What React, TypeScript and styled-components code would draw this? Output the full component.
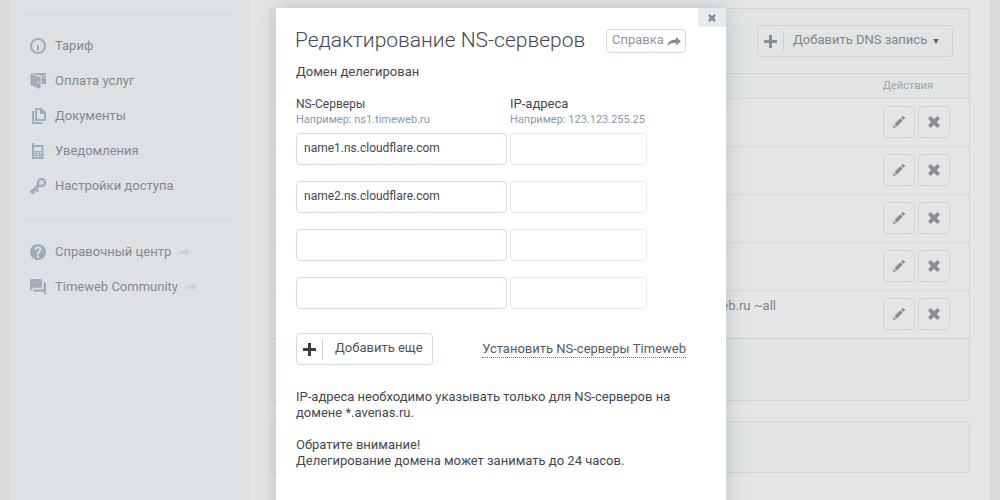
import React from 'react';
import styled, { createGlobalStyle } from 'styled-components';

const GlobalStyle = createGlobalStyle`
  *, *::before, *::after { box-sizing: border-box; }
  html, body { margin: 0; height: 100%; overflow: hidden; }
  body { font-family: Roboto, "Liberation Sans", sans-serif; font-size: 13px; line-height: 16px; color: #434752; }
  button, input { font: inherit; color: inherit; letter-spacing: inherit; }
  svg { display: block; flex: none; }
`;

const Page = styled.div`
  position: relative;
  display: flex;
  width: 1000px;
  height: 500px;
  padding: 0 10px;
  background: #d9dadc;
  overflow: hidden;
`;

const Sidebar = styled.nav`
  width: 240px;
  padding: 14px 15px 0 14px;
  background: #dde1e4;
`;

const MenuGroup = styled.ul`
  margin: 0;
  padding: 13px 0 17px;
  border-top: 1px solid #d5d9dc;
  list-style: none;
`;

const MenuItem = styled.li`
  display: flex;
  align-items: center;
  height: 35px;
  padding-left: 6px;
  color: #85888f;
  font-size: 13px;
  white-space: nowrap;
`;

const MenuIcon = styled.span`
  display: flex;
  width: 25px;
  color: #a2acb7;
`;

const ExternalMark = styled.span`
  margin-left: 6px;
  padding-top: 1px;
  color: #cdd1d4;
`;

const Content = styled.main`
  flex: 1;
  padding: 8px 20px 0;
  background: #e5e5e5;
`;

const Panel = styled.section<{ $height: number }>`
  height: ${p => p.$height}px;
  margin-bottom: 20px;
  border: 1px solid #cfd4d5;
  border-radius: 4px;
  background: #e1e4e3;
  overflow: hidden;
`;

const PanelToolbar = styled.div`
  display: flex;
  justify-content: flex-end;
  height: 65px;
  padding: 16px 16px 0;
  border-bottom: 1px solid #cfd4d5;
`;

const IconButton = styled.button<{ $width: number; $faded?: boolean }>`
  display: flex;
  align-items: center;
  width: ${p => p.$width}px;
  height: 32px;
  padding: 0 0 0 6px;
  border: 1px solid ${p => (p.$faded ? '#cfd2d3' : '#cfdde4')};
  border-radius: 4px;
  background: transparent;
  color: ${p => (p.$faded ? '#818489' : '#50525a')};
  white-space: nowrap;
`;

const PlusMark = styled.span<{ $faded?: boolean }>`
  color: ${p => (p.$faded ? '#898e9b' : '#3b3c44')};
`;

const ButtonDivider = styled.span<{ $gap: number }>`
  width: 1px;
  height: 20px;
  margin: 0 ${p => p.$gap}px 0 6px;
  background: #ccd0d4;
`;

const ButtonText = styled.span`
  position: relative;
  top: -1px;
`;

const Caret = styled.span`
  margin-left: 6px;
  border: 3px solid transparent;
  border-top: 5px solid #696c73;
  border-bottom: 0;
`;

const TableHead = styled.div`
  display: flex;
  justify-content: flex-end;
  height: 25px;
  padding: 4px 36px 0 0;
  border-bottom: 1px solid #d5d8d9;
  color: #a0a4a7;
  font-size: 11px;
`;

const Row = styled.div<{ $last?: boolean }>`
  display: flex;
  align-items: center;
  justify-content: flex-end;
  gap: 3px;
  height: 48px;
  padding: 0 19px 1px 0;
  border-bottom: 1px solid ${p => (p.$last ? '#cbd0d2' : '#d7d9da')};
  background: #e5e5e5;
`;

const RecordValue = styled.span`
  margin: -16px 104px 0 0;
  color: #818386;
`;

const SquareButton = styled.button`
  display: flex;
  align-items: center;
  justify-content: center;
  width: 32px;
  height: 32px;
  padding: 0;
  border: 1px solid #d0d2d3;
  border-radius: 4px;
  background: transparent;
  color: #888d9b;
`;

const Modal = styled.div`
  position: absolute;
  top: 8px;
  left: 276px;
  width: 450px;
  height: 520px;
  padding: 21px 40px 0 20px;
  background: #fff;
  box-shadow: 0 0 20px rgba(125, 145, 165, 0.42);
`;

const CloseButton = styled.button`
  position: absolute;
  top: 0;
  right: 0;
  display: flex;
  align-items: center;
  justify-content: center;
  width: 28px;
  height: 19px;
  padding: 0;
  border: 0;
  border-radius: 0 0 0 4px;
  background: #e8ebee;
  color: #858b98;
`;

const ModalHeader = styled.header`
  display: flex;
  justify-content: space-between;
  height: 35px;
`;

const Title = styled.h1`
  margin: -1px 0 0 -1px;
  font-size: 21px;
  font-weight: 300;
  line-height: 24px;
  white-space: nowrap;
`;

const HelpButton = styled.button`
  display: flex;
  align-items: center;
  justify-content: space-between;
  width: 80px;
  height: 24px;
  padding: 0 4px 2px 5px;
  border: 1px solid #cfdde4;
  border-radius: 4px;
  background: #fff;
  color: #8d95a3;
`;

const ArrowMark = styled.span`
  padding-top: 2px;
  color: #858b9b;
`;

const Status = styled.p`
  margin: 0 0 16px;
`;

const FieldRow = styled.div`
  display: grid;
  grid-template-columns: 211px 137px;
  column-gap: 3px;
  margin-bottom: 16px;
`;

const FieldHeading = styled(FieldRow)`
  margin-bottom: 5px;
`;

const FieldTitle = styled.div<{ $large?: boolean }>`
  font-size: ${p => (p.$large ? 13 : 12)}px;
`;

const FieldHint = styled.div`
  color: #8b98a7;
  font-size: 11px;
  line-height: 16px;
  white-space: nowrap;
`;

const Field = styled.input<{ $muted?: boolean }>`
  width: 100%;
  height: 32px;
  padding: 0 7px 2px;
  border: 1px solid ${p => (p.$muted ? '#e7edf0' : '#cfdde4')};
  border-radius: 4px;
  outline: 0;
  background: #fff;
  font-size: 12px;
`;

const Actions = styled.div`
  display: flex;
  align-items: center;
  justify-content: space-between;
  margin: 24px 0;
`;

const ResetLink = styled.a`
  border-bottom: 1px dotted #757984;
  color: #555a66;
  white-space: nowrap;
`;

const Note = styled.p`
  margin: 0 0 16px;
`;

const Gauge = () => (
  <svg width="16" height="16" viewBox="0 0 16 16" fill="none" stroke="currentColor">
    <circle cx="8" cy="8" r="7" strokeWidth="2" />
    <path d="M8 7v5.500" strokeWidth="2" />
    <path d="M3.400 8.500h1M4.500 5l.8.8M8 3.400v1M11.500 5l-.8.8M12.600 8.500h-1" strokeWidth="1" opacity=".55" />
  </svg>
);

const Wallet = () => (
  <svg width="17" height="16" viewBox="0 0 17 16" fill="currentColor">
    <path fillRule="evenodd" d="M.5.5l10 3.700V16L.5 12.300zM7.500 8v2.500l1.200.4V8.400z" />
    <path d="M1 0h15v2H7zM9 2.600h7v1.300h-4zM11.500 4.600H16V11h-4.500z" />
  </svg>
);

const Documents = () => (
  <svg width="17" height="16" viewBox="0 0 17 16" fill="none" stroke="currentColor" strokeWidth="2">
    <path d="M6 1h5L15 5v7H6z" />
    <path d="M3 3v12h9.500" />
    <path d="M10 1v5h5z" fill="currentColor" stroke="none" />
  </svg>
);

const Phone = () => (
  <svg width="17" height="16" viewBox="0 0 17 16" fill="currentColor">
    <path
      fillRule="evenodd"
      d="M2 0h2v2h9.500v14H2zM4 4v4h7.500V4zM4 9v1h2V9zm3 0v1h2V9zm3 0v1h1.500V9zM4 11v1h2v-1zm3 0v1h2v-1zm3 0v1h1.500v-1zM4 13v1h2v-1zm3 0v1h2v-1zm3 0v1h1.500v-1z"
    />
  </svg>
);

const Key = () => (
  <svg width="17" height="16" viewBox="0 0 17 16" fill="none" stroke="currentColor">
    <circle cx="11.500" cy="4.500" r="3.500" strokeWidth="2.300" />
    <path d="M9.300 6.700L1 15" strokeWidth="3.600" />
    <path d="M5 10.500l3 3M2 13l2.500 2.500" strokeWidth="2" />
  </svg>
);

const Help = () => (
  <svg width="16" height="16" viewBox="2 2 20 20" fill="currentColor">
    <path d="M12 2C6.480 2 2 6.480 2 12s4.480 10 10 10 10-4.480 10-10S17.520 2 12 2zm1.300 17.200h-2.600v-2.600h2.600zm2.300-7.900l-1 1c-.9.900-1.300 1.400-1.300 2.900h-2.600v-.700c0-1.100.500-2.100 1.200-2.800l1.300-1.300c.4-.3.600-.8.600-1.300 0-1-.8-1.800-1.800-1.800s-1.800.8-1.800 1.800H7.700C7.700 6.600 9.600 4.700 12 4.700s4.300 1.900 4.300 4.300c0 .9-.3 1.700-.7 2.300z" />
  </svg>
);

const Chat = () => (
  <svg width="16" height="16" viewBox="2 2 20 20" fill="currentColor">
    <path d="M21 6h-2v9H6v2c0 .55.45 1 1 1h11l4 4V7c0-.55-.45-1-1-1zm-4 6V3c0-.55-.45-1-1-1H3c-.55 0-1 .45-1 1v14l4-4h10c.55 0 1-.45 1-1z" />
  </svg>
);

const Arrow = ({ width = 14 }: { width?: number }) => (
  <svg width={width} height={width * 9 / 14} viewBox="0 0 14 9" fill="currentColor">
    <path d="M9 0l5 4.200-5 4.200V6C5 5.700 2.500 6.400 0 9c.8-4 4-6.500 9-6.600z" />
  </svg>
);

const Plus = () => (
  <svg width="13" height="13" viewBox="0 0 13 13" fill="currentColor">
    <path d="M5 0h3v5h5v3H8v5H5V8H0V5h5z" />
  </svg>
);

const Pencil = () => (
  <svg width="12" height="12" viewBox="0 0 12 12" fill="currentColor">
    <path d="M0 12l.8-3.200 2.400 2.400zM1.500 8.100l5.800-5.800 2.400 2.400-5.800 5.800zM8 1.600L9.200.4c.5-.5 1-.5 1.500 0l.9.9c.5.5.5 1 0 1.500L10.400 4z" />
  </svg>
);

const Cross = ({ size = 12 }: { size?: number }) => (
  <svg width={size} height={size} viewBox="0 0 12 12" fill="currentColor">
    <path d="M2.700 0L6 3.200 9.300 0 12 2.700 8.800 6 12 9.300 9.300 12 6 8.800 2.700 12 0 9.300 3.200 6 0 2.700z" />
  </svg>
);

const mainMenu = [
  { label: 'Тариф', icon: <Gauge /> },
  { label: 'Оплата услуг', icon: <Wallet /> },
  { label: 'Документы', icon: <Documents /> },
  { label: 'Уведомления', icon: <Phone /> },
  { label: 'Настройки доступа', icon: <Key /> },
];

const helpMenu = [
  { label: 'Справочный центр', icon: <Help /> },
  { label: 'Timeweb Community', icon: <Chat /> },
];

const records = ['', '', '', '', 'v=spf1 include:_spf.timeweb.ru ~all'];
const servers = ['name1.ns.cloudflare.com', 'name2.ns.cloudflare.com', '', ''];

export default function App() {
  return (
    <>
      <GlobalStyle />
      <Page>
        <Sidebar>
          <MenuGroup>
            {mainMenu.map(item => (
              <MenuItem key={item.label}>
                <MenuIcon>{item.icon}</MenuIcon>
                {item.label}
              </MenuItem>
            ))}
          </MenuGroup>
          <MenuGroup>
            {helpMenu.map(item => (
              <MenuItem key={item.label}>
                <MenuIcon>{item.icon}</MenuIcon>
                {item.label}
                <ExternalMark><Arrow width={13} /></ExternalMark>
              </MenuItem>
            ))}
          </MenuGroup>
        </Sidebar>
        <Content>
          <Panel $height={393}>
            <PanelToolbar>
              <IconButton $width={196} $faded>
                <PlusMark $faded><Plus /></PlusMark>
                <ButtonDivider $gap={9} />
                <ButtonText>Добавить DNS запись</ButtonText>
                <Caret />
              </IconButton>
            </PanelToolbar>
            <TableHead>Действия</TableHead>
            {records.map((value, i) => (
              <Row key={i} $last={i === records.length - 1}>
                {value && <RecordValue>{value}</RecordValue>}
                <SquareButton aria-label="Изменить"><Pencil /></SquareButton>
                <SquareButton aria-label="Удалить"><Cross /></SquareButton>
              </Row>
            ))}
          </Panel>
          <Panel $height={52} />
        </Content>
        <Modal role="dialog">
          <CloseButton aria-label="Закрыть"><Cross size={8} /></CloseButton>
          <ModalHeader>
            <Title>Редактирование NS-серверов</Title>
            <HelpButton>Справка <ArrowMark><Arrow /></ArrowMark></HelpButton>
          </ModalHeader>
          <Status>Домен делегирован</Status>
          <FieldHeading>
            <div>
              <FieldTitle>NS-Серверы</FieldTitle>
              <FieldHint>Например: ns1.timeweb.ru</FieldHint>
            </div>
            <div>
              <FieldTitle $large>IP-адреса</FieldTitle>
              <FieldHint>Например: 123.123.255.25</FieldHint>
            </div>
          </FieldHeading>
          {servers.map((server, i) => (
            <FieldRow key={i}>
              <Field defaultValue={server} />
              <Field $muted />
            </FieldRow>
          ))}
          <Actions>
            <IconButton $width={137}>
              <PlusMark><Plus /></PlusMark>
              <ButtonDivider $gap={12} />
              <ButtonText>Добавить еще</ButtonText>
            </IconButton>
            <ResetLink>Установить NS-серверы Timeweb</ResetLink>
          </Actions>
          <Note>IP-адреса необходимо указывать только для NS-серверов на домене *.avenas.ru.</Note>
          <Note>
            Обратите внимание!
            <br />
            Делегирование домена может занимать до 24 часов.
          </Note>
        </Modal>
      </Page>
    </>
  );
}
